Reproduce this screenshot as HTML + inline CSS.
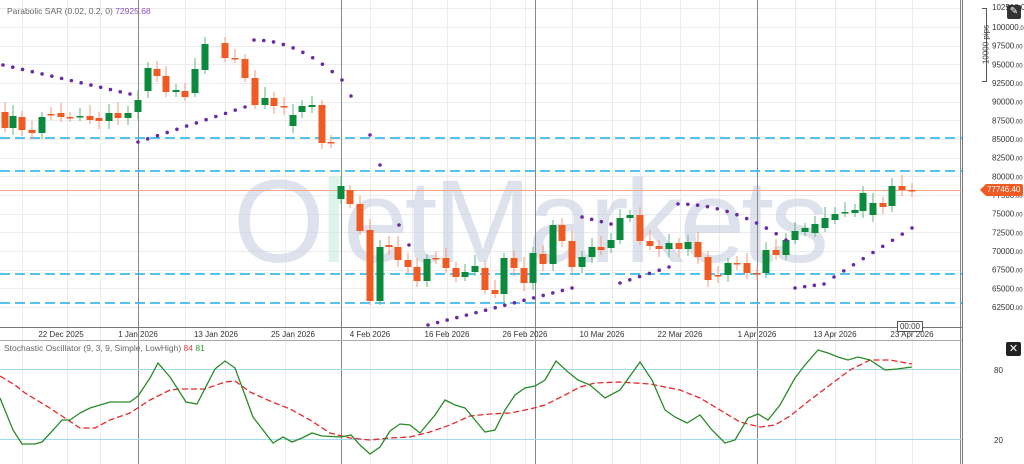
<!DOCTYPE html>
<html><head><meta charset="utf-8"><style>
html,body{margin:0;padding:0;background:#fff;width:1024px;height:464px;overflow:hidden;font-family:"Liberation Sans",sans-serif}
svg{display:block}
text{font-family:"Liberation Sans",sans-serif}
</style></head><body>
<svg id="s" width="1024" height="464" viewBox="0 0 1024 464" xmlns="http://www.w3.org/2000/svg">
<g id="grid" stroke="#ececec" stroke-width="1"></g>
<text x="233" y="262" font-size="118" fill="#c9cfe0" opacity="0.6" letter-spacing="-4">O<tspan fill="#c8eedd">l</tspan>etMarkets</text>
<g id="lines"></g>
<g id="candles"></g>
<g id="sar" fill="#6a2aa8"></g>
<g id="stoch"></g>
<g id="axis" font-size="8" fill="#333"></g>
</svg>
<script>
var NS="http://www.w3.org/2000/svg",s=document.getElementById('s');
function el(p,t,a,txt){var e=document.createElementNS(NS,t);for(var k in a)e.setAttribute(k,a[k]);if(txt!=null)e.textContent=txt;document.getElementById(p)?document.getElementById(p).appendChild(e):s.appendChild(e);return e}
var gx=[22,67,100,138,185,225,285,341,370,412,447,490,525,572,612,640,680,719,757,795,835,875,912,960];
gx.forEach(function(x){el('grid','line',{x1:x+.5,y1:0,x2:x+.5,y2:464})});
for(var p=62500;p<=102500;p+=2500){var y=Math.round(27+(100000-p)*0.007467)+.5;el('grid','line',{x1:0,y1:y,x2:962,y2:y})}
[138,341,535,757,960].forEach(function(x){el('lines','line',{x1:x+.5,y1:0,x2:x+.5,y2:464,stroke:'#888','stroke-width':1})});
[138,171,274,303].forEach(function(y){el('lines','line',{x1:0,y1:y,x2:962,y2:y,stroke:'#1bb0ea','stroke-width':1.6,'stroke-dasharray':'10,5'})});
el('lines','line',{x1:0,y1:190.5,x2:962,y2:190.5,stroke:'#f4a58a','stroke-width':1});
el('lines','line',{x1:0,y1:327.5,x2:962,y2:327.5,stroke:'#777'});
el('lines','line',{x1:962.5,y1:0,x2:962.5,y2:464,stroke:'#777'});
el('lines','line',{x1:0,y1:340.5,x2:962,y2:340.5,stroke:'#aaa'});
el('lines','line',{x1:0,y1:369.5,x2:962,y2:369.5,stroke:'#9fdcf0'});
el('lines','line',{x1:0,y1:439.5,x2:962,y2:439.5,stroke:'#9fdcf0'});
var C=[[5,112,128],[13,128,116],[22,117,130],[32,130,133],[42,133,117],[51,114,115],[61,113,117],[70,117,118],[80,117,116],[90,116,120],[99,118,121],[109,121,113],[118,113,118],[128,118,113],[138,112,100],[148,91,68],[157,69,76],[166,76,92],[176,92,90],[185,91,97],[195,93,69],[205,70,44],[225,43,58],[235,58,59],[245,59,78],[255,78,105],[265,105,98],[274,98,106],[284,106,107],[293,126,115],[302,112,106],[312,107,105],[322,105,143],[331,142,143],
[341,199,186],[350,190,204],[360,204,231],[370,230,301],[380,301,247],[389,245,247],[398,247,260],[408,260,267],[417,267,281],[427,281,259],[436,258,259],[446,258,268],[456,268,277],[465,277,272],[475,272,266],[485,268,290],[495,290,294],[504,294,258],[514,258,268],[524,268,283],[533,283,253],[543,254,264],[553,264,225],[562,225,241],[572,241,267],[582,267,257],[592,257,247],[601,247,250],[611,248,240],[620,240,218],[630,218,215],[640,215,241],[650,241,246],[659,246,249],[669,249,243],[679,243,249],[688,249,242],[698,242,257],[708,257,280],[718,275,276],[728,275,263],[737,263,264],[747,263,273],[757,273,274],[766,273,250],[776,250,255],[786,255,240],[795,240,231],[805,232,228],[815,233,224],[825,228,218],[835,220,214],[845,213,212],[855,213,210],[863,211,193],[873,215,203],[883,203,207],[892,206,186],[902,186,190],[912,190,191]];
C.forEach(function(c){var up=c[2]<c[1],col=up?'#0b8a3d':'#f05a23',wc=up?'#5cb87f':'#f59a78';
var t=Math.min(c[1],c[2]),b=Math.max(c[1],c[2]),h=Math.max(b-t,1.5);
el('candles','line',{x1:c[0],y1:t-5-(c[0]%7),x2:c[0],y2:b+4+(c[0]%5),stroke:wc,'stroke-width':1});
el('candles','rect',{x:c[0]-3.5,y:t,width:7,height:h,fill:col});});
function dots(x0,y0,x1,y1,n,curve){for(var i=0;i<n;i++){var f=i/(n-1);var y=y0+(y1-y0)*(curve?f*f:f);el('sar','circle',{cx:x0+(x1-x0)*f,cy:y,r:1.8})}}
dots(3,65,130,94,14,0);dots(138,142,245,107,12,0);
dots(254,40,342,80,10,1);[[351,96],[370,135],[380,165],[399,225],[409,245]].forEach(function(p){el('sar','circle',{cx:p[0],cy:p[1],r:1.8})});
dots(428,325,572,288,16,0);dots(582,217,611,224,4,0);
dots(620,283,669,267,6,0);dots(678,204,786,240,12,1);
dots(795,288,824,284,4,0);dots(834,277,912,228,9,0);
var G=[[0,398],[13,430],[22,444],[35,444],[42,442],[55,428],[62,420],[70,420],[80,413],[90,408],[100,405],[110,402],[130,402],[138,396],[150,378],[158,363],[170,377],[186,402],[197,404],[215,369],[225,361],[235,368],[253,417],[263,430],[273,443],[283,437],[292,442],[302,438],[312,433],[322,436],[341,437],[351,435],[360,445],[370,454],[380,447],[390,431],[400,424],[410,425],[420,433],[435,415],[445,400],[455,405],[465,408],[475,420],[485,432],[495,430],[505,410],[515,395],[525,388],[535,386],[545,380],[556,361],[568,372],[578,380],[590,385],[605,398],[620,390],[640,362],[652,380],[665,410],[675,417],[687,423],[700,415],[712,430],[725,443],[735,440],[748,418],[758,414],[768,420],[780,405],[795,378],[805,365],[818,350],[828,353],[838,357],[848,360],[858,357],[870,360],[885,370],[897,369],[912,367]];
var R=[[0,376],[15,385],[25,393],[45,405],[65,418],[80,428],[95,428],[110,420],[130,413],[150,400],[170,390],[180,389],[205,389],[225,382],[235,381],[250,392],[270,401],[290,409],[310,420],[330,433],[350,438],[370,440],[390,438],[410,437],[430,432],[450,425],[470,416],[490,414],[510,413],[530,409],[545,405],[565,395],[580,387],[595,383],[620,382],[650,384],[680,390],[700,398],[720,410],[740,422],[760,427],[775,425],[790,416],[810,400],[830,385],[850,370],[870,360],[890,360],[912,364]];
el('stoch','polyline',{points:R.join(' '),fill:'none',stroke:'#e8282a','stroke-width':1.3,'stroke-dasharray':'6,3'});
el('stoch','polyline',{points:G.join(' '),fill:'none',stroke:'#2a8a2a','stroke-width':1.3});
for(var p=62500;p<=100000;p+=2500){var y=27+(100000-p)*0.007467;
var t=el('axis','text',{x:992,y:y+3});t.innerHTML=p+'<tspan font-size="6">.00</tspan>';}
var t=el('axis','text',{x:992,y:10});t.textContent='102500.00';
el('axis','text',{x:994,y:373},'80');el('axis','text',{x:994,y:443},'20');
[[61,'22 Dec 2025'],[138,'1 Jan 2026'],[216,'13 Jan 2026'],[293,'25 Jan 2026'],[370,'4 Feb 2026'],[447,'16 Feb 2026'],[525,'26 Feb 2026'],[602,'10 Mar 2026'],[680,'22 Mar 2026'],[757,'1 Apr 2026'],[835,'13 Apr 2026'],[912,'23 Apr 2026']].forEach(function(d){el('axis','text',{x:d[0],y:337,'text-anchor':'middle'},d[1])});
</script>
<div style="position:absolute;left:0;top:0;width:1024px;height:464px;pointer-events:none">
<div style="position:absolute;left:7px;top:6px;font-size:8.5px;color:#666">Parabolic SAR (0.02, 0.2, 0) <span style="color:#8a4fbf">72925.68</span></div>
<div style="position:absolute;left:4px;top:343px;font-size:8.5px;color:#666">Stochastic Oscillator (9, 3, 9, Simple, LowHigh) <span style="color:#f04040">84</span> <span style="color:#2a9a2a">81</span></div>
<div style="position:absolute;left:985px;top:184px;width:36px;height:12px;background:#f05a23;color:#fff;font-size:8px;line-height:12px;padding-left:2px;border-radius:2px">77746.40</div>
<div style="position:absolute;left:980px;top:184px;width:0;height:0;border-top:6px solid transparent;border-bottom:6px solid transparent;border-right:6px solid #f05a23"></div>
<div style="position:absolute;left:897px;top:321px;width:24px;height:9px;border:1px solid #555;background:#fff;font-size:8px;line-height:9px;text-align:center;color:#333">00:00</div>
<div style="position:absolute;left:1007px;top:5px;width:14px;height:14px;background:#333;border-radius:2px;color:#fff;font-size:10px;line-height:14px;text-align:center">&#9998;</div>
<div style="position:absolute;left:1006px;top:342px;width:15px;height:14px;background:#222;border-radius:2px;color:#fff;font-size:11px;line-height:14px;text-align:center">✕</div>
<div style="position:absolute;left:982px;top:8px;width:4px;height:72px;border:1px solid #555;border-left:none"></div>
<div style="position:absolute;left:966px;top:40px;font-size:8px;color:#444;transform:rotate(-90deg);transform-origin:center;width:40px;text-align:center">10000 pips</div>
</div>
</body></html>
